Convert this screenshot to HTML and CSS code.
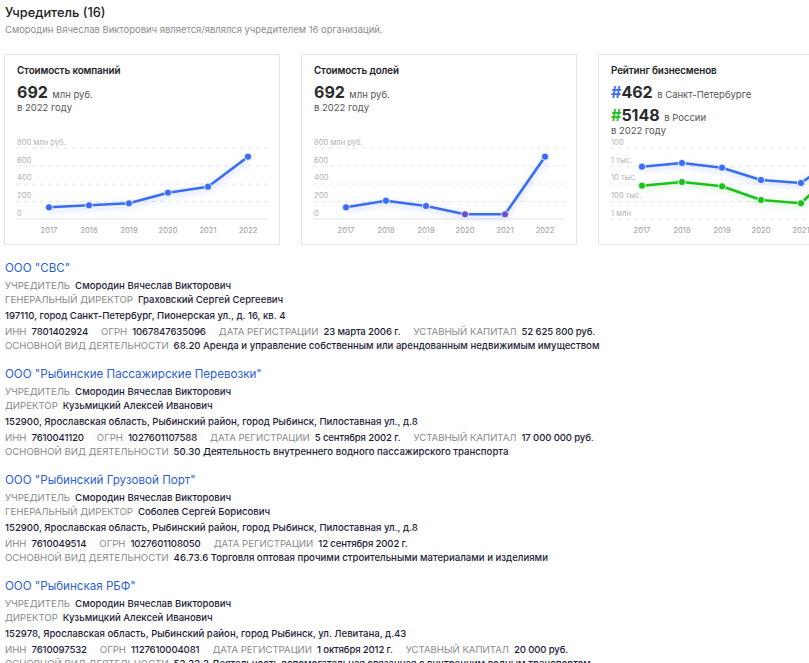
FILE: index.html
```html
<!DOCTYPE html>
<html lang="ru">
<head>
<meta charset="utf-8">
<title>Учредитель</title>
<link rel="stylesheet" href="styles.css">
</head>
<body>
<div class="page">
  <h1 class="heading">Учредитель (16)</h1>
  <p class="subtitle">Смородин Вячеслав Викторович является/являлся учредителем 16 организаций.</p>

  <div class="cards">
    <div class="card">
      <div class="card-head">
        <div class="card-title">Стоимость компаний</div>
        <div class="big-row"><span class="big">692</span> <span class="unit">млн руб.</span></div>
        <div class="year">в 2022 году</div>
      </div>
      <svg class="chart" viewBox="0 83 274 106" width="274" height="106">
        <g class="grid">
          <line x1="11" y1="93" x2="263" y2="93"/>
          <line x1="11" y1="111" x2="263" y2="111"/>
          <line x1="11" y1="129" x2="263" y2="129"/>
          <line x1="11" y1="146.5" x2="263" y2="146.5"/>
        </g>
        <line class="base" x1="11" y1="164" x2="263" y2="164"/>
        <g class="ylab">
          <text x="12" y="89.5">800 млн руб.</text>
          <text x="12" y="107.5">600</text>
          <text x="12" y="125">400</text>
          <text x="12" y="143">200</text>
          <text x="12" y="161">0</text>
        </g>
        <g class="xlab">
          <text x="44" y="177.5">2017</text>
          <text x="84" y="177.5">2018</text>
          <text x="124" y="177.5">2019</text>
          <text x="163" y="177.5">2020</text>
          <text x="203" y="177.5">2021</text>
          <text x="243" y="177.5">2022</text>
        </g>
        <polyline class="line blue" points="44,152.3 84,150.3 124,148.3 163,137.7 203,131.7 243,101.7"/>
        <g class="dots blue-dots">
          <circle cx="44" cy="152.3" r="3.6"/>
          <circle cx="84" cy="150.3" r="3.6"/>
          <circle cx="124" cy="148.3" r="3.6"/>
          <circle cx="163" cy="137.7" r="3.6"/>
          <circle cx="203" cy="131.7" r="3.6"/>
          <circle cx="243" cy="101.7" r="3.6"/>
        </g>
      </svg>
    </div>

    <div class="card">
      <div class="card-head">
        <div class="card-title">Стоимость долей</div>
        <div class="big-row"><span class="big">692</span> <span class="unit">млн руб.</span></div>
        <div class="year">в 2022 году</div>
      </div>
      <svg class="chart" viewBox="0 83 274 106" width="274" height="106">
        <g class="grid">
          <line x1="11" y1="93" x2="263" y2="93"/>
          <line x1="11" y1="111" x2="263" y2="111"/>
          <line x1="11" y1="129" x2="263" y2="129"/>
          <line x1="11" y1="146.5" x2="263" y2="146.5"/>
        </g>
        <line class="base" x1="11" y1="164" x2="263" y2="164"/>
        <g class="ylab">
          <text x="12" y="89.5">800 млн руб.</text>
          <text x="12" y="107.5">600</text>
          <text x="12" y="125">400</text>
          <text x="12" y="143">200</text>
          <text x="12" y="161">0</text>
        </g>
        <g class="xlab">
          <text x="44" y="177.5">2017</text>
          <text x="84" y="177.5">2018</text>
          <text x="124" y="177.5">2019</text>
          <text x="163" y="177.5">2020</text>
          <text x="203" y="177.5">2021</text>
          <text x="243" y="177.5">2022</text>
        </g>
        <polyline class="line blue" points="44,152.3 84,145.7 124,151 163,159.3 203,159.3 243,101.7"/>
        <g class="dots blue-dots">
          <circle cx="44" cy="152.3" r="3.6"/>
          <circle cx="84" cy="145.7" r="3.6"/>
          <circle cx="124" cy="151" r="3.6"/>
          <circle class="purple" cx="163" cy="159.3" r="3.6"/>
          <circle class="purple" cx="203" cy="159.3" r="3.6"/>
          <circle cx="243" cy="101.7" r="3.6"/>
        </g>
      </svg>
    </div>

    <div class="card">
      <div class="card-head">
        <div class="card-title">Рейтинг бизнесменов</div>
        <div class="big-row"><span class="big"><span class="hash-blue">#</span>462</span> <span class="unit">в Санкт-Петербурге</span></div>
        <div class="big-row second"><span class="big"><span class="hash-green">#</span>5148</span> <span class="unit">в России</span></div>
        <div class="year">в 2022 году</div>
      </div>
      <svg class="chart" viewBox="0 83 274 106" width="274" height="106">
        <g class="grid">
          <line x1="11" y1="93" x2="263" y2="93"/>
          <line x1="11" y1="111" x2="263" y2="111"/>
          <line x1="11" y1="129" x2="263" y2="129"/>
          <line x1="11" y1="146.5" x2="263" y2="146.5"/>
          <line x1="11" y1="164" x2="263" y2="164"/>
        </g>
        <g class="ylab">
          <text x="12" y="89.5">100</text>
          <text x="12" y="107.5">1 тыс.</text>
          <text x="12" y="125">10 тыс.</text>
          <text x="12" y="143">100 тыс.</text>
          <text x="12" y="161">1 млн</text>
        </g>
        <g class="xlab">
          <text x="43" y="177.5">2017</text>
          <text x="83" y="177.5">2018</text>
          <text x="123" y="177.5">2019</text>
          <text x="162" y="177.5">2020</text>
          <text x="202" y="177.5">2021</text>
          <text x="242" y="177.5">2022</text>
        </g>
        <polyline class="line green" points="43,130.7 83,127 123,131.3 162,145 202,148.3 242,110"/>
        <polyline class="line blue" points="43,111.7 83,108 123,112.7 162,125 202,128 242,100"/>
        <g class="dots green-dots">
          <circle cx="43" cy="130.7" r="3.6"/>
          <circle cx="83" cy="127" r="3.6"/>
          <circle cx="123" cy="131.3" r="3.6"/>
          <circle cx="162" cy="145" r="3.6"/>
          <circle cx="202" cy="148.3" r="3.6"/>
          <circle cx="242" cy="110" r="3.6"/>
        </g>
        <g class="dots blue-dots">
          <circle cx="43" cy="111.7" r="3.6"/>
          <circle cx="83" cy="108" r="3.6"/>
          <circle cx="123" cy="112.7" r="3.6"/>
          <circle cx="162" cy="125" r="3.6"/>
          <circle cx="202" cy="128" r="3.6"/>
          <circle cx="242" cy="100" r="3.6"/>
        </g>
      </svg>
    </div>
  </div>

  <div class="companies">
    <div class="company">
      <a class="company-name" href="#">ООО "СВС"</a>
      <div class="row"><span class="label">УЧРЕДИТЕЛЬ</span><span class="value">Смородин Вячеслав Викторович</span></div>
      <div class="row"><span class="label">ГЕНЕРАЛЬНЫЙ ДИРЕКТОР</span><span class="value">Граховский Сергей Сергеевич</span></div>
      <div class="row address">197110, город Санкт-Петербург, Пионерская ул., д. 16, кв. 4</div>
      <div class="row ids">
        <span class="pair"><span class="label">ИНН</span><span class="value">7801402924</span></span>
        <span class="pair"><span class="label">ОГРН</span><span class="value">1067847635096</span></span>
        <span class="pair"><span class="label">ДАТА РЕГИСТРАЦИИ</span><span class="value">23 марта 2006 г.</span></span>
        <span class="pair"><span class="label">УСТАВНЫЙ КАПИТАЛ</span><span class="value">52 625 800 руб.</span></span>
      </div>
      <div class="row activity"><span class="label">ОСНОВНОЙ ВИД ДЕЯТЕЛЬНОСТИ</span><span class="value">68.20 Аренда и управление собственным или арендованным недвижимым имуществом</span></div>
    </div>

    <div class="company">
      <a class="company-name" href="#">ООО "Рыбинские Пассажирские Перевозки"</a>
      <div class="row"><span class="label">УЧРЕДИТЕЛЬ</span><span class="value">Смородин Вячеслав Викторович</span></div>
      <div class="row"><span class="label">ДИРЕКТОР</span><span class="value">Кузьмицкий Алексей Иванович</span></div>
      <div class="row address">152900, Ярославская область, Рыбинский район, город Рыбинск, Пилоставная ул., д.8</div>
      <div class="row ids">
        <span class="pair"><span class="label">ИНН</span><span class="value">7610041120</span></span>
        <span class="pair"><span class="label">ОГРН</span><span class="value">1027601107588</span></span>
        <span class="pair"><span class="label">ДАТА РЕГИСТРАЦИИ</span><span class="value">5 сентября 2002 г.</span></span>
        <span class="pair"><span class="label">УСТАВНЫЙ КАПИТАЛ</span><span class="value">17 000 000 руб.</span></span>
      </div>
      <div class="row activity"><span class="label">ОСНОВНОЙ ВИД ДЕЯТЕЛЬНОСТИ</span><span class="value">50.30 Деятельность внутреннего водного пассажирского транспорта</span></div>
    </div>

    <div class="company">
      <a class="company-name" href="#">ООО "Рыбинский Грузовой Порт"</a>
      <div class="row"><span class="label">УЧРЕДИТЕЛЬ</span><span class="value">Смородин Вячеслав Викторович</span></div>
      <div class="row"><span class="label">ГЕНЕРАЛЬНЫЙ ДИРЕКТОР</span><span class="value">Соболев Сергей Борисович</span></div>
      <div class="row address">152900, Ярославская область, Рыбинский район, город Рыбинск, Пилоставная ул., д.8</div>
      <div class="row ids">
        <span class="pair"><span class="label">ИНН</span><span class="value">7610049514</span></span>
        <span class="pair"><span class="label">ОГРН</span><span class="value">1027601108050</span></span>
        <span class="pair"><span class="label">ДАТА РЕГИСТРАЦИИ</span><span class="value">12 сентября 2002 г.</span></span>
      </div>
      <div class="row activity"><span class="label">ОСНОВНОЙ ВИД ДЕЯТЕЛЬНОСТИ</span><span class="value">46.73.6 Торговля оптовая прочими строительными материалами и изделиями</span></div>
    </div>

    <div class="company">
      <a class="company-name" href="#">ООО "Рыбинская РБФ"</a>
      <div class="row"><span class="label">УЧРЕДИТЕЛЬ</span><span class="value">Смородин Вячеслав Викторович</span></div>
      <div class="row"><span class="label">ДИРЕКТОР</span><span class="value">Кузьмицкий Алексей Иванович</span></div>
      <div class="row address">152978, Ярославская область, Рыбинский район, город Рыбинск, ул. Левитана, д.43</div>
      <div class="row ids">
        <span class="pair"><span class="label">ИНН</span><span class="value">7610097532</span></span>
        <span class="pair"><span class="label">ОГРН</span><span class="value">1127610004081</span></span>
        <span class="pair"><span class="label">ДАТА РЕГИСТРАЦИИ</span><span class="value">1 октября 2012 г.</span></span>
        <span class="pair"><span class="label">УСТАВНЫЙ КАПИТАЛ</span><span class="value">20 000 руб.</span></span>
      </div>
      <div class="row activity"><span class="label">ОСНОВНОЙ ВИД ДЕЯТЕЛЬНОСТИ</span><span class="value">52.22.2 Деятельность вспомогательная связанная с внутренним водным транспортом</span></div>
    </div>
  </div>
</div>
</body>
</html>
```

FILE: styles.css
```css
html, body {
  margin: 0;
  padding: 0;
  background: #fff;
  overflow: hidden;
}

body {
  font-family: Inter, "Noto Sans", "Liberation Sans", sans-serif;
  color: #222;
}

.page {
  padding: 4px 0 0 4px;
  width: 805px;
  overflow: hidden;
}

.heading {
  margin: 0;
  padding-left: 1px;
  font-size: 12.8px;
  font-weight: 500;
  line-height: 18px;
  color: #222;
}

.subtitle {
  margin: 1px 0 0;
  padding-left: 1px;
  font-size: 9.45px;
  line-height: 14px;
  color: #8c8c8c;
}

.cards {
  display: flex;
  gap: 21px;
  margin-top: 17px;
}

.card {
  flex: 0 0 276px;
  height: 191px;
  box-sizing: border-box;
  border: 1px solid #e4e4e4;
  display: flex;
  flex-direction: column;
  overflow: hidden;
}

.card-head {
  flex: 0 0 auto;
  padding: 9px 12px 0;
}

.card-title {
  font-size: 9.8px;
  font-weight: 600;
  line-height: 14px;
  color: #222;
  letter-spacing: -0.1px;
}

.big-row {
  margin-top: 6px;
  height: 16px;
  line-height: 16px;
  white-space: nowrap;
}

.big-row.second {
  margin-top: 7px;
}

.big {
  font-size: 16px;
  font-weight: 700;
  color: #2b2b2b;
}

.hash-blue { color: #3b6ef5; }
.hash-green { color: #1fc21f; }

.unit {
  font-size: 9.5px;
  color: #555;
}

.year {
  font-size: 9.5px;
  line-height: 13px;
  height: 13px;
  color: #555;
  margin-top: 1px;
}

.chart {
  display: block;
  margin-top: auto;
  flex: 0 0 auto;
  font-family: Inter, "Noto Sans", sans-serif;
}

.grid line {
  stroke: #e6e6e6;
  stroke-width: 1;
  stroke-dasharray: 4 4;
}

.base {
  stroke: #e3e3e3;
  stroke-width: 1;
}

.ylab text {
  font-size: 7.6px;
  fill: #b3b3b3;
}

.xlab text {
  font-size: 7.6px;
  fill: #9a9a9a;
  text-anchor: middle;
}

.line {
  fill: none;
  stroke-width: 2.6;
  stroke-linejoin: round;
  stroke-linecap: round;
}

.line.blue {
  stroke: #3a6cf4;
  filter: drop-shadow(0 2px 3px rgba(58, 108, 244, 0.35));
}

.line.green {
  stroke: #1cc21c;
  filter: drop-shadow(0 2px 3px rgba(28, 194, 28, 0.3));
}

.blue-dots circle {
  fill: #3a6cf4;
  stroke: #fff;
  stroke-width: 0.8;
}

.blue-dots circle.purple {
  fill: #6a4fd0;
}

.green-dots circle {
  fill: #1cc21c;
  stroke: #fff;
  stroke-width: 0.8;
}

.companies {
  margin-top: 13px;
  padding-left: 1px;
}

.company {
  margin-bottom: 11px;
}

.company-name {
  display: block;
  font-size: 11.6px;
  line-height: 20px;
  color: #2d5fd0;
  text-decoration: none;
  margin-bottom: 1px;
  white-space: nowrap;
}

.row {
  font-size: 9.6px;
  line-height: 14px;
  white-space: nowrap;
}

.row.address {
  margin-top: 1px;
  line-height: 15px;
  color: #1d1d38;
  font-weight: 500;
}

.row.ids {
  margin-top: 1px;
  line-height: 15px;
  display: flex;
  gap: 13px;
}

.row.ids .value {
  letter-spacing: -0.15px;
}

.label {
  color: #8a8a8a;
  margin-right: 5px;
}

.value {
  color: #1d1d38;
  font-weight: 500;
}
```
